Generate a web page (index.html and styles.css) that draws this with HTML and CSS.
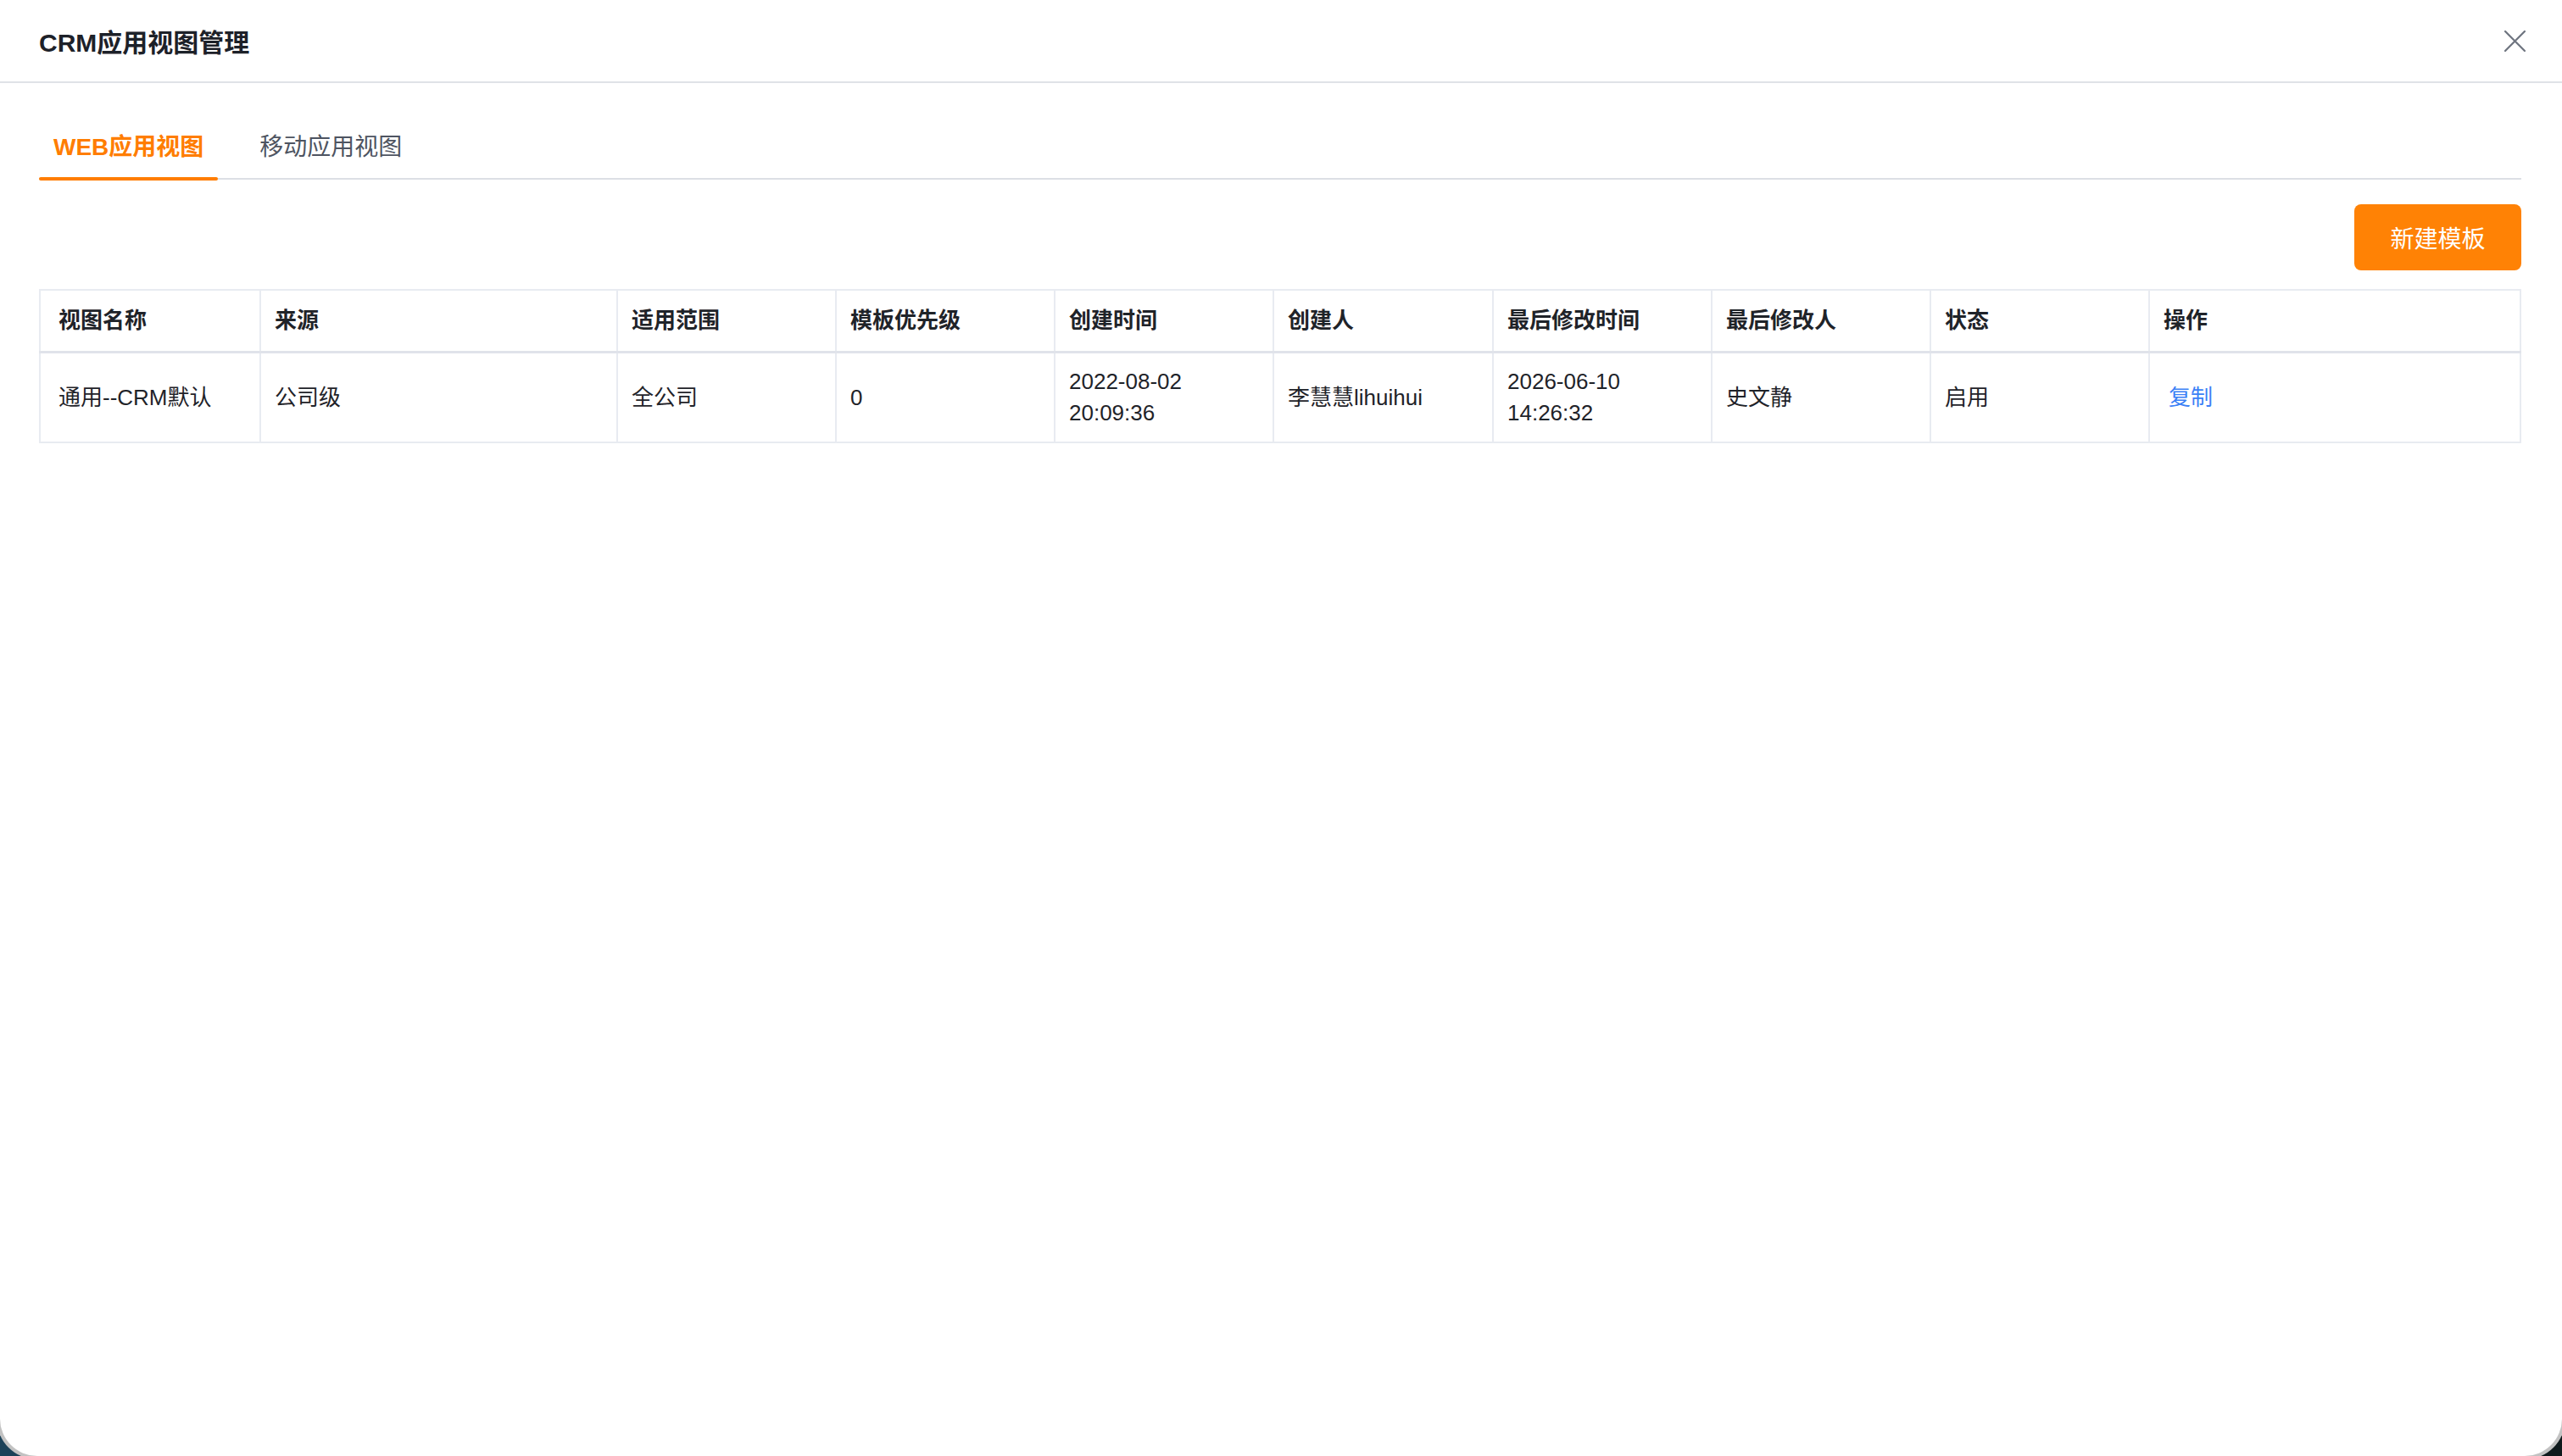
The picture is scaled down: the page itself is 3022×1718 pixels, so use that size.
FILE: index.html
```html
<!DOCTYPE html>
<html lang="zh-CN">
<head>
<meta charset="utf-8">
<title>CRM应用视图管理</title>
<link rel="stylesheet" href="styles.css">
</head>
<body>
<div class="window">
  <header class="dlg-head">
    <h1 class="dlg-title">CRM应用视图管理</h1>
    <button class="close" aria-label="关闭">
      <svg viewBox="0 0 24 24" width="25" height="25"><path d="M1 1 L23 23 M23 1 L1 23" stroke="#6f7580" stroke-width="2.2" fill="none" stroke-linecap="round"/></svg>
    </button>
  </header>
  <div class="dlg-body">
    <nav class="tabs">
      <div class="tab active">WEB应用视图</div>
      <div class="tab">移动应用视图</div>
    </nav>
    <div class="toolbar">
      <button class="btn-primary">新建模板</button>
    </div>
    <table class="grid">
      <colgroup>
        <col class="c1"><col class="c2"><col class="c3"><col class="c4"><col class="c5">
        <col class="c6"><col class="c7"><col class="c8"><col class="c9"><col class="c10">
      </colgroup>
      <thead>
        <tr>
          <th>视图名称</th><th>来源</th><th>适用范围</th><th>模板优先级</th><th>创建时间</th>
          <th>创建人</th><th>最后修改时间</th><th>最后修改人</th><th>状态</th><th>操作</th>
        </tr>
      </thead>
      <tbody>
        <tr>
          <td>通用--CRM默认</td>
          <td>公司级</td>
          <td>全公司</td>
          <td>0</td>
          <td>2022-08-02<br>20:09:36</td>
          <td>李慧慧lihuihui</td>
          <td>2026-06-10<br>14:26:32</td>
          <td>史文静</td>
          <td>启用</td>
          <td><a class="link" href="#">复制</a></td>
        </tr>
      </tbody>
    </table>
  </div>
</div>
</body>
</html>
```
FILE: styles.css
```css
html, body {
  margin: 0;
  height: 100%;
  overflow: hidden;
}
body {
  background: linear-gradient(90deg, #1c4259 0%, #16303c 50%, #0f1a1d 100%);
  font-family: "Liberation Sans", "Noto Sans CJK SC", sans-serif;
  color: #1f2329;
}
.window {
  height: 1718px;
  background: #fff;
  border-radius: 0 0 44px 44px;
  box-shadow: 0 0 0 4px #c2c2c2;
  overflow: hidden;
}
.dlg-head {
  box-sizing: border-box;
  height: 98px;
  border-bottom: 2px solid #dfe2e7;
  display: flex;
  align-items: center;
  justify-content: space-between;
  padding: 0 43px 0 46px;
}
.dlg-title {
  margin: 0;
  font-size: 30px;
  font-weight: 700;
  color: #1d2129;
}
.close {
  border: none;
  background: none;
  padding: 0;
  width: 25px;
  height: 25px;
  display: flex;
  cursor: pointer;
}
.dlg-body {
  padding: 0 48px 0 46px;
}
.tabs {
  display: flex;
  margin-top: 34px;
  border-bottom: 2px solid #dcdfe5;
}
.tab {
  position: relative;
  height: 78px;
  display: flex;
  align-items: center;
  padding: 0 16px;
  font-size: 28px;
  color: #4e5461;
}
.tab + .tab {
  margin-left: 33px;
}
.tab.active {
  color: #ff7d00;
  font-weight: 700;
  padding: 0 17px;
}
.tab.active::after {
  content: "";
  position: absolute;
  left: 0;
  right: 0;
  bottom: -3px;
  height: 4px;
  border-radius: 2px;
  background: #ff7d00;
}
.toolbar {
  display: flex;
  justify-content: flex-end;
  margin-top: 29px;
}
.btn-primary {
  width: 197px;
  height: 78px;
  border: none;
  border-radius: 8px;
  background: #ff8205;
  color: #fff;
  font-family: inherit;
  font-size: 28px;
  cursor: pointer;
}
.grid {
  width: 100%;
  margin-top: 22px;
  border-collapse: collapse;
  table-layout: fixed;
  border: 2px solid #e8ebf1;
  font-size: 26px;
}
.c1 { width: 260px; }
.c2 { width: 421px; }
.c3, .c4, .c5, .c7, .c8, .c9 { width: 258px; }
.c6 { width: 259px; }
.grid th,
.grid td {
  border: 2px solid #e8ebf1;
  padding: 0 16px;
  line-height: 37px;
  text-align: left;
  vertical-align: middle;
  color: #1f2329;
}
.grid th {
  height: 71px;
  font-weight: 700;
  border-bottom: 3px solid #e0e3ea;
}
.grid td {
  height: 104px;
  font-weight: 400;
}
.grid th:first-child,
.grid td:first-child {
  padding-left: 21px;
}
.link {
  color: #3b80f6;
  text-decoration: none;
  padding-left: 6px;
}
```
